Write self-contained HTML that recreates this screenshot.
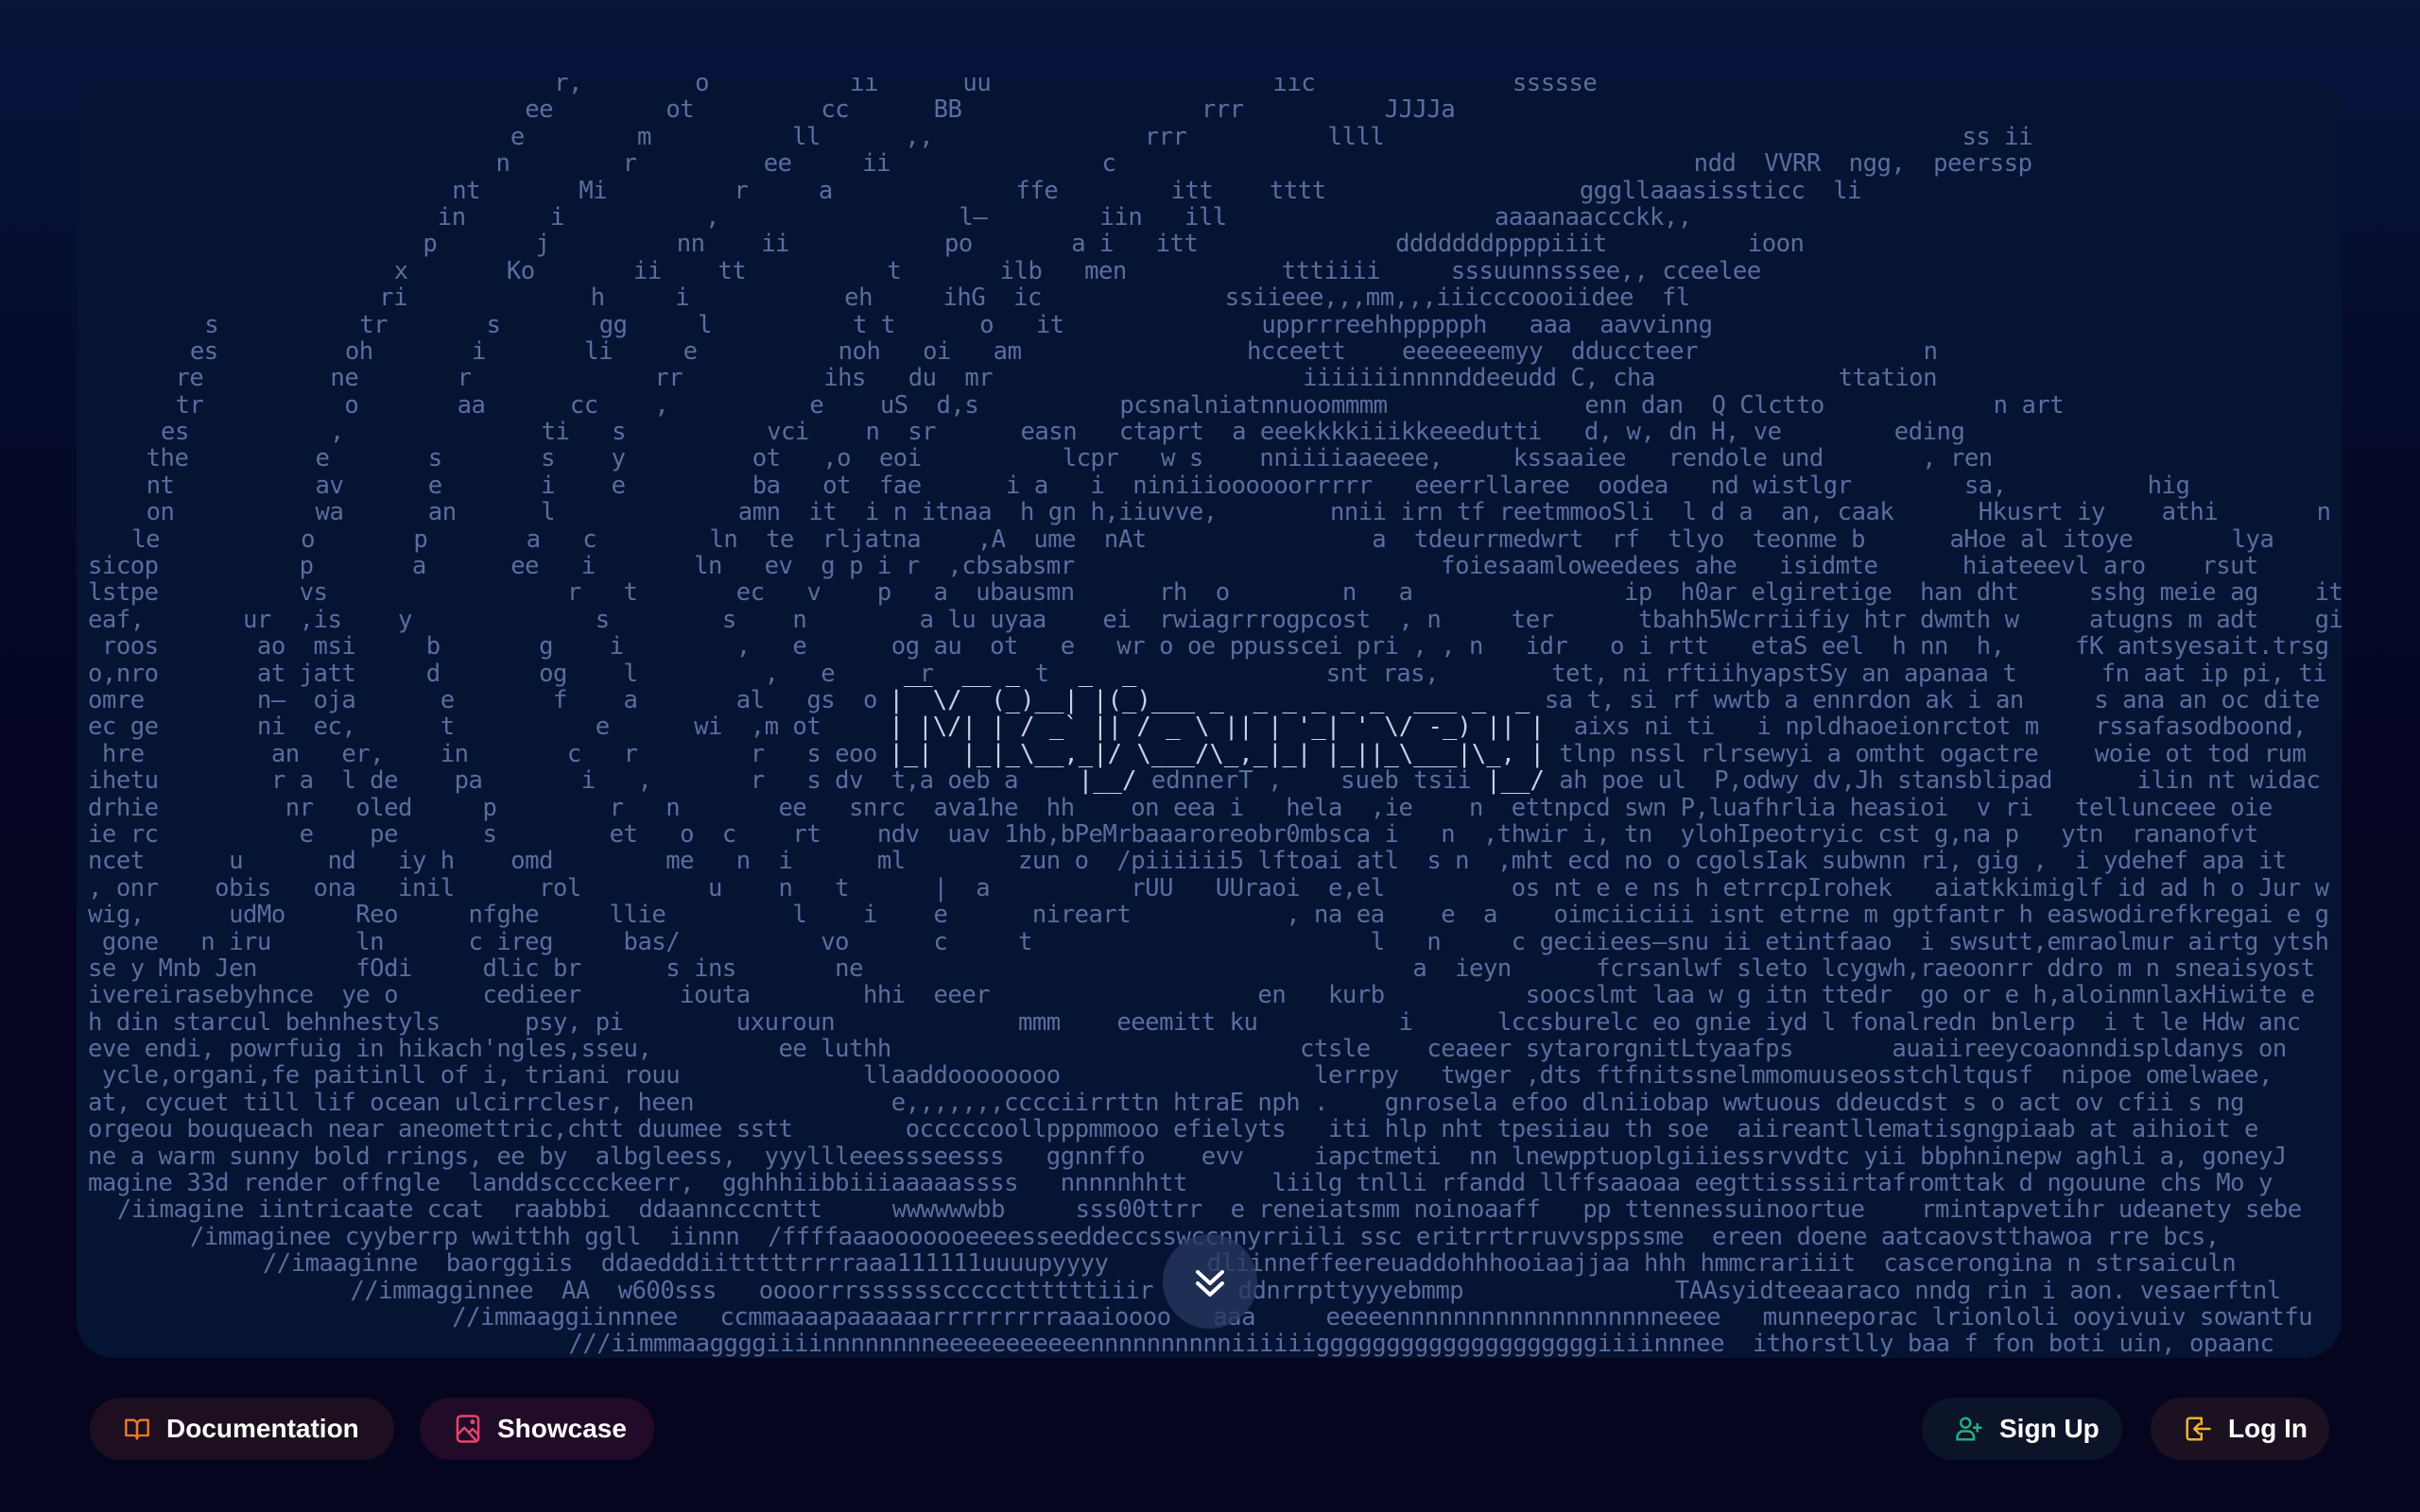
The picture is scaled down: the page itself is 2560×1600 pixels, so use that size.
<!DOCTYPE html>
<html><head><meta charset="utf-8"><style>
html,body{margin:0;padding:0}
body{width:2560px;height:1600px;overflow:hidden;position:relative;background:linear-gradient(180deg,#061538 0px,#06123a 90px,#050a28 500px,#050521 1000px,#050520 1600px);font-family:"Liberation Sans",sans-serif}
.card{position:absolute;left:81px;top:82px;width:2396px;height:1355px;border-radius:40px;background:#061434;overflow:hidden}
.ascii{position:absolute;left:12px;top:-8px;font-family:"DejaVu Sans Mono","Liberation Mono",monospace;font-size:25.6px;line-height:28.4px;color:#5a6d9e}
.ascii div{height:28.4px;position:relative;white-space:pre;letter-spacing:-0.5px}
.lg{position:absolute;left:55ch;color:#c9d1e4;letter-spacing:0}
.lg i{font-style:normal;color:#5a6d9e}
.rt{position:absolute}
.chev{position:absolute;left:1230px;top:1306px;width:100px;height:100px;border-radius:50%;background:rgba(40,55,95,.75)}
.btn{position:absolute;top:1479px;height:66px;border-radius:33px;display:flex;align-items:center;box-sizing:border-box;color:#fff;font-weight:bold;font-size:28px;white-space:nowrap}
.btn svg{margin-right:17px;flex-shrink:0}
</style></head><body>
<div class="card">
<div class="ascii"><div style="padding-left:32ch">r,        o          ii      uu                    iic              ssssse</div><div style="padding-left:30ch">ee        ot         cc      BB                 rrr          JJJJa</div><div style="padding-left:29ch">e        m          ll      ,,               rrr          llll                                         ss ii</div><div style="padding-left:28ch">n        r         ee     ii               c                                         ndd  VVRR  ngg,  peerssp</div><div style="padding-left:25ch">nt       Mi         r     a             ffe        itt    tttt                  gggllaaasissticc  li</div><div style="padding-left:24ch">in      i          ,                 l–        iin   ill                   aaaanaaccckk,,</div><div style="padding-left:23ch">p       j         nn    ii           po       a i   itt              dddddddppppiiit          ioon</div><div style="padding-left:21ch">x       Ko       ii    tt          t       ilb   men           tttiiii     sssuunnsssee,, cceelee</div><div style="padding-left:20ch">ri             h     i           eh     ihG  ic             ssiieee,,,mm,,,iiicccoooiidee  fl</div><div style="padding-left:8ch">s          tr       s       gg     l          t t      o   it              upprrreehhppppph   aaa  aavvinng</div><div style="padding-left:7ch">es         oh       i       li     e          noh   oi   am                hcceett    eeeeeeemyy  dduccteer                n</div><div style="padding-left:6ch">re         ne       r             rr          ihs   du  mr                      iiiiiiinnnnddeeudd C, cha             ttation</div><div style="padding-left:6ch">tr          o       aa      cc    ,          e    uS  d,s          pcsnalniatnnuoommmm              enn dan  Q Clctto            n art</div><div style="padding-left:5ch">es          ,              ti   s          vci    n  sr      easn   ctaprt  a eeekkkkiiikkeeedutti   d, w, dn H, ve        eding</div><div style="padding-left:4ch">the         e       s       s    y         ot   ,o  eoi          lcpr   w s    nniiiiaaeeee,     kssaaiee   rendole und       , ren</div><div style="padding-left:4ch">nt          av      e       i    e         ba   ot  fae      i a   i  niniiioooooorrrrr   eeerrllaree  oodea   nd wistlgr        sa,          hig</div><div style="padding-left:4ch">on          wa      an      l             amn  it  i n itnaa  h gn h,iiuvve,        nnii irn tf reetmmooSli  l d a  an, caak      Hkusrt iy    athi       n</div><div style="padding-left:3ch">le          o       p       a   c        ln  te  rljatna    ,A  ume  nAt                a  tdeurrmedwrt  rf  tlyo  teonme b      aHoe al itoye       lya</div><div>sicop          p       a      ee   i       ln   ev  g p i r  ,cbsabsmr                          foiesaamloweedees ahe   isidmte      hiateeevl aro    rsut</div><div>lstpe          vs                 r   t       ec   v    p   a  ubausmn      rh  o        n   a               ip  h0ar elgiretige  han dht     sshg meie ag    ite</div><div>eaf,       ur  ,is    y             s        s    n        a lu uyaa    ei  rwiagrrrogpcost  , n     ter      tbahh5Wcrriifiy htr dwmth w     atugns m adt    git</div><div> roos       ao  msi     b       g    i        ,   e      og au  ot   e   wr o oe ppusscei pri , , n   idr   o i rtt   etaS eel  h nn  h,     fK antsyesait.trsg</div><div>o,nro       at jatt     d       og    l         ,   e      r<span class="lg"> __  __ _    _  _</span><span class="rt" style="left:65ch">t</span><span class="rt" style="left:85ch">snt ras,        tet, ni rftiihyapstSy an apanaa t      fn aat ip pi, ti</span></div><div>omre        n–  oja      e       f    a       al   gs  o<span class="lg">|  \/  (_)__| |(_)___ _  _ _ _ _ _  ___ _  _</span><span class="rt" style="left:100ch">sa t, si rf wwtb a ennrdon ak i an     s ana an oc dite</span></div><div>ec ge       ni  ec,      t          e      wi  ,m ot<span class="lg">| |\/| | / _` || / _ \ || | '_| ' \/ -_) || |</span><span class="rt" style="left:102ch">aixs ni ti   i npldhaoeionrctot m    rssafasodboond,</span></div><div> hre         an   er,    in       c   r        r   s eoo<span class="lg">|_|  |_|_\__,_|/ \___/\_,_|_| |_||_\___|\_, |</span><span class="rt" style="left:101ch">tlnp nssl rlrsewyi a omtht ogactre    woie ot tod rum</span></div><div>ihetu        r a  l de    pa       i   ,       r   s dv  t,a oeb a<span class="lg">             |__/<i> ednnerT ,    sueb tsii </i>|__/</span><span class="rt" style="left:101ch">ah poe ul  P,odwy dv,Jh stansblipad      ilin nt widac</span></div><div>drhie         nr   oled     p        r   n       ee   snrc  ava1he  hh    on eea i   hela  ,ie    n  ettnpcd swn P,luafhrlia heasioi  v ri   tellunceee oie</div><div>ie rc          e    pe      s        et   o  c    rt    ndv  uav 1hb,bPeMrbaaaroreobr0mbsca i   n  ,thwir i, tn  ylohIpeotryic cst g,na p   ytn  rananofvt</div><div>ncet      u      nd   iy h    omd        me   n  i      ml        zun o  /piiiiii5 lftoai atl  s n  ,mht ecd no o cgolsIak subwnn ri, gig ,  i ydehef apa it</div><div>, onr    obis   ona   inil      rol         u    n   t      |  a          rUU   UUraoi  e,el         os nt e e ns h etrrcpIrohek   aiatkkimiglf id ad h o Jur w</div><div>wig,      udMo     Reo     nfghe     llie         l    i    e      nireart           , na ea    e  a    oimciiciii isnt etrne m gptfantr h easwodirefkregai e g  aed</div><div> gone   n iru      ln      c ireg     bas/          vo      c     t                        l   n     c geciiees–snu ii etintfaao  i swsutt,emraolmur airtg ytsh aile</div><div>se y Mnb Jen       fOdi     dlic br      s ins       ne                                       a  ieyn      fcrsanlwf sleto lcygwh,raeoonrr ddro m n sneaisyost  it</div><div>ivereirasebyhnce  ye o      cedieer       iouta        hhi  eeer                   en   kurb          soocslmt laa w g itn ttedr  go or e h,aloinmnlaxHiwite e</div><div>h din starcul behnhestyls      psy, pi        uxuroun             mmm    eeemitt ku          i      lccsburelc eo gnie iyd l fonalredn bnlerp  i t le Hdw anc</div><div>eve endi, powrfuig in hikach'ngles,sseu,         ee luthh                             ctsle    ceaeer sytarorgnitLtyaafps       auaiireeycoaonndispldanys on</div><div> ycle,organi,fe paitinll of i, triani rouu             llaaddoooooooo                  lerrpy   twger ,dts ftfnitssnelmmomuuseosstchltqusf  nipoe omelwaee,</div><div>at, cycuet till lif ocean ulcirrclesr, heen              e,,,,,,,cccciirrttn htraE nph .    gnrosela efoo dlniiobap wwtuous ddeucdst s o act ov cfii s ng</div><div>orgeou bouqueach near aneomettric,chtt duumee sstt        occcccoollpppmmooo efielyts   iti hlp nht tpesiiau th soe  aiireantllematisgngpiaab at aihioit e</div><div>ne a warm sunny bold rrings, ee by  albgleess,  yyyllleeessseesss   ggnnffo    evv     iapctmeti  nn lnewpptuoplgiiiessrvvdtc yii bbphninepw aghli a, goneyJ</div><div>magine 33d render offngle  landdscccckeerr,  gghhhiibbiiiaaaaassss   nnnnnhhtt      liilg tnlli rfandd llffsaaoaa eegttisssiirtafromttak d ngouune chs Mo y</div><div style="padding-left:2ch">/iimagine iintricaate ccat  raabbbi  ddaanncccnttt     wwwwwwbb     sss00ttrr  e reneiatsmm noinoaaff   pp ttennessuinoortue    rmintapvetihr udeanety sebe</div><div style="padding-left:7ch">/immaginee cyyberrp wwitthh ggll  iinnn  /ffffaaaooooooeeeesseeddeccsswccnnyrriili ssc eritrrtrruvvsppssme  ereen doene aatcaovstthawoa rre bcs,</div><div style="padding-left:12ch">//imaaginne  baorggiis  ddaedddiitttttrrrraaa111111uuuupyyyy       dliinneffeereuaddohhhooiaajjaa hhh hmmcrariiit  cascerongina n strsaiculn</div><div style="padding-left:18ch">//immagginnee  AA  w600sss   oooorrrsssssscccccttttttiiir      ddnrrpttyyyebmmp               TAAsyidteeaaraco nndg rin i aon. vesaerftnl</div><div style="padding-left:25ch">//immaaggiinnnee   ccmmaaaapaaaaaarrrrrrrrraaaioooo   aaa     eeeeennnnnnnnnnnnnnnnnnneeee   munneeporac lrionloli ooyivuiv sowantfu</div><div style="padding-left:33ch">///iimmmaaggggiiiinnnnnnnneeeeeeeeeeennnnnnnnnniiiiiiggggggggggggggggggggiiiinnnee  ithorstlly baa f fon boti uin, opaanc</div></div>
</div>
<div class="chev"><svg width="100" height="100" viewBox="0 0 100 100"><path d="M37 40 L50 52 L63 40 M37 52 L50 64 L63 52" fill="none" stroke="#fff" stroke-width="4" stroke-linecap="round" stroke-linejoin="round"/></svg></div>

<div class="btn" style="left:95px;width:322px;padding-left:36px;background:#1d0f20"><svg width="28" height="28" viewBox="0 0 24 24" fill="none" stroke="#f07d23" stroke-width="2" stroke-linejoin="round"><path d="M2 4h6a4 4 0 0 1 4 4v13a3 3 0 0 0-3-3H2z"/><path d="M22 4h-6a4 4 0 0 0-4 4v13a3 3 0 0 1 3-3h7z"/></svg>Documentation</div>
<div class="btn" style="left:444px;width:248px;padding-left:37px;background:#220b28"><svg width="28" height="32" viewBox="0 0 22 26" fill="none" stroke="#e8456b" stroke-width="2" stroke-linejoin="round"><rect x="2" y="2" width="18" height="22" rx="3"/><path d="M2 18l6-6 10 11M12 16l3-3 5 5"/><circle cx="15" cy="7" r="1" fill="#e8456b"/></svg>Showcase</div>
<div class="btn" style="left:2033px;width:212px;padding-left:35px;background:#0b1428"><svg width="30" height="30" viewBox="0 0 24 24" fill="none" stroke="#22b07d" stroke-width="2" stroke-linecap="round"><circle cx="9" cy="7" r="4"/><path d="M2 21v-2a5 5 0 0 1 5-5h4a5 5 0 0 1 5 5v2zM19 8v6M16 11h6"/></svg>Sign Up</div>
<div class="btn" style="left:2275px;width:189px;padding-left:35px;background:#1c1120"><svg width="30" height="30" viewBox="0 0 24 24" fill="none" stroke="#f0b429" stroke-width="2" stroke-linecap="round" stroke-linejoin="round"><path d="M15 3H5a2 2 0 0 0-2 2v14a2 2 0 0 0 2 2h10v-5M15 8V3"/><path d="M22 12H9M13 8l-4 4 4 4"/></svg>Log In</div>
</body></html>
